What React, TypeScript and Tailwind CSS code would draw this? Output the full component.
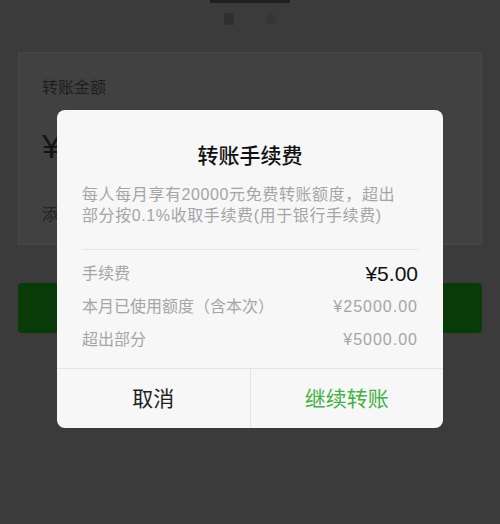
import React from "react";

const font = { fontFamily: '"Liberation Sans", "Noto Sans CJK SC", sans-serif' };

function FeeRow({ label, value, strong }: { label: string; value: string; strong?: boolean }) {
  return (
    <div className="flex h-[33px] items-center justify-between">
      <span className="text-[16px] text-[#a5a5a7]">{label}</span>
      <span
        className={
          strong
            ? "text-[21px] text-[#111111]"
            : "text-[16px] tracking-[1px] text-[#a5a5a7]"
        }
      >
        {value}
      </span>
    </div>
  );
}

export default function App() {
  return (
    <div className="relative h-[524px] w-[500px] overflow-hidden bg-[#3b3b3b]" style={font}>
      {/* dimmed page behind the dialog */}
      <div className="flex h-[52px] flex-col items-center">
        <div className="h-[3px] w-[80px] bg-[#1d1f1a]" />
        <div className="mt-[10px] flex items-center gap-[32px]">
          <div className="h-[12px] w-[10px] rounded-[1px] bg-[#2f2f2f]" />
          <div className="h-[10px] w-[10px] rounded-full bg-[#363636]" />
        </div>
      </div>

      <div className="mx-[18px] h-[193px] border border-[#474747] bg-[#414141] px-[23px] pt-[23px]">
        <div className="text-[16px] leading-[24px] text-[#1e1e1e]">转账金额</div>
        <div className="mt-[28px] text-[34px] leading-[36px] text-[#151515]">¥</div>
        <div className="mt-[39px] text-[16px] leading-[24px] text-[#222222]">添加转账说明</div>
      </div>

      <div className="mx-[18px] mt-[38px] h-[50px] rounded-[4px] bg-[#083b08]" />

      {/* fee dialog */}
      <div className="absolute left-[57px] top-[110px] flex h-[318px] w-[386px] flex-col overflow-hidden rounded-[8px] bg-[#f7f7f8]">
        <div className="px-[25px] pt-[32px]">
          <div className="text-center text-[21px] font-medium leading-[28px] text-[#111111]">转账手续费</div>
          <div className="mt-[14px] text-[16px] leading-[21px] tracking-[0.6px] text-[#a5a5a7]">
            每人每月享有20000元免费转账额度，超出
            <br />
            部分按0.1%收取手续费(用于银行手续费)
          </div>
          <div className="mt-[23px] border-t border-[#e6e6e8]" />
          <div className="pt-[7px]">
            <FeeRow label="手续费" value="¥5.00" strong />
            <FeeRow label="本月已使用额度（含本次）" value="¥25000.00" />
            <FeeRow label="超出部分" value="¥5000.00" />
          </div>
        </div>
        <div className="mt-auto flex h-[60px] border-t border-[#e4e4e6]">
          <button className="flex flex-1 items-center justify-center text-[21px] text-[#1e1e1e]">取消</button>
          <div className="w-px bg-[#e4e4e6]" />
          <button className="flex flex-1 items-center justify-center text-[21px] text-[#45b046]">继续转账</button>
        </div>
      </div>
    </div>
  );
}
